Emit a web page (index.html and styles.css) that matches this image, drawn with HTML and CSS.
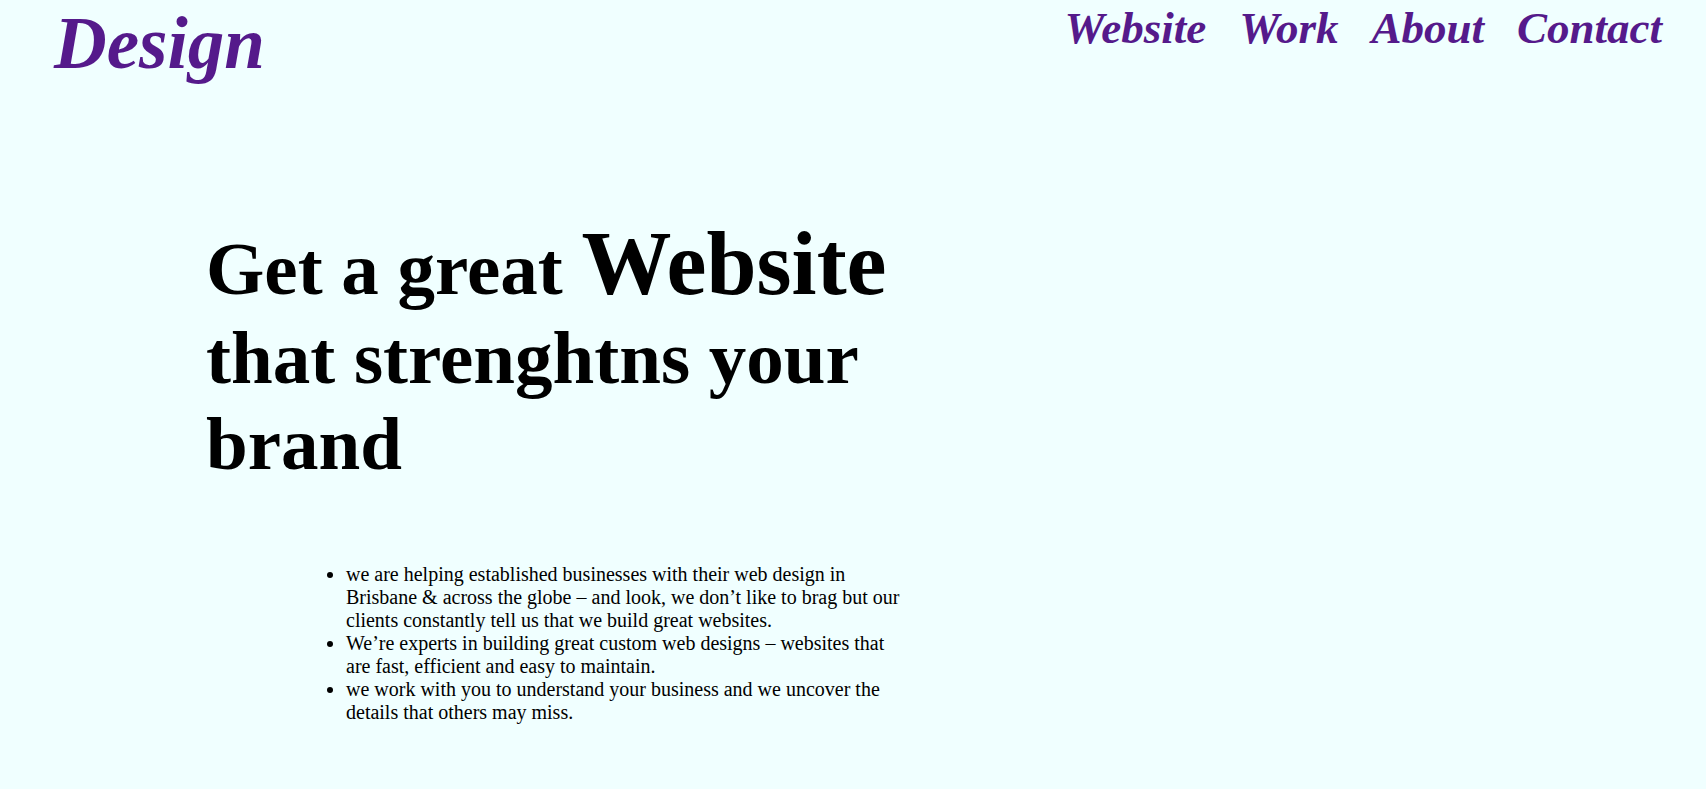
FILE: index.html
```html
<!DOCTYPE html>
<html lang="en">
<head>
<meta charset="utf-8">
<title>Design</title>
<link rel="stylesheet" href="styles.css">
</head>
<body>
<header class="site-header">
  <a class="logo" href="#">Design</a>
  <nav class="nav">
    <a class="nav-link" href="#">Website</a>
    <a class="nav-link" href="#">Work</a>
    <a class="nav-link" href="#">About</a>
    <a class="nav-link" href="#">Contact</a>
  </nav>
</header>
<main class="hero">
  <h1 class="hero-title">Get a great <span class="hero-big">Website</span> that strenghtns your brand</h1>
  <ul class="points">
    <li>we are helping established businesses with their web design in Brisbane &amp; across the globe – and look, we don’t like to brag but our clients constantly tell us that we build great websites.</li>
    <li>We’re experts in building great custom web designs – websites that are fast, efficient and easy to maintain.</li>
    <li>we work with you to understand your business and we uncover the details that others may miss.</li>
  </ul>
</main>
</body>
</html>
```
FILE: styles.css
```css
html, body {
  margin: 0;
  padding: 0;
}
body {
  background: #f0ffff;
  font-family: "Liberation Serif", "Times New Roman", serif;
  color: #000;
}
.site-header {
  display: flex;
  justify-content: space-between;
  align-items: flex-start;
  padding: 2px 44px 0 54px;
}
.logo {
  display: block;
  font-size: 73px;
  font-weight: bold;
  font-style: italic;
  color: #551a8b;
  text-decoration: none;
  line-height: normal;
}
.nav {
  display: flex;
  gap: 33px;
}
.nav-link {
  font-size: 45px;
  font-weight: bold;
  font-style: italic;
  color: #551a8b;
  text-decoration: none;
  line-height: normal;
}
.hero {
  padding-left: 206px;
  margin-top: 126px;
}
.hero-title {
  margin: 0;
  width: 740px;
  font-size: 75px;
  font-weight: bold;
  line-height: normal;
}
.hero-big {
  font-size: 90px;
}
.points {
  margin: 76px 0 0 100px;
  padding-left: 40px;
  width: 560px;
  font-size: 20px;
  line-height: normal;
}
```
